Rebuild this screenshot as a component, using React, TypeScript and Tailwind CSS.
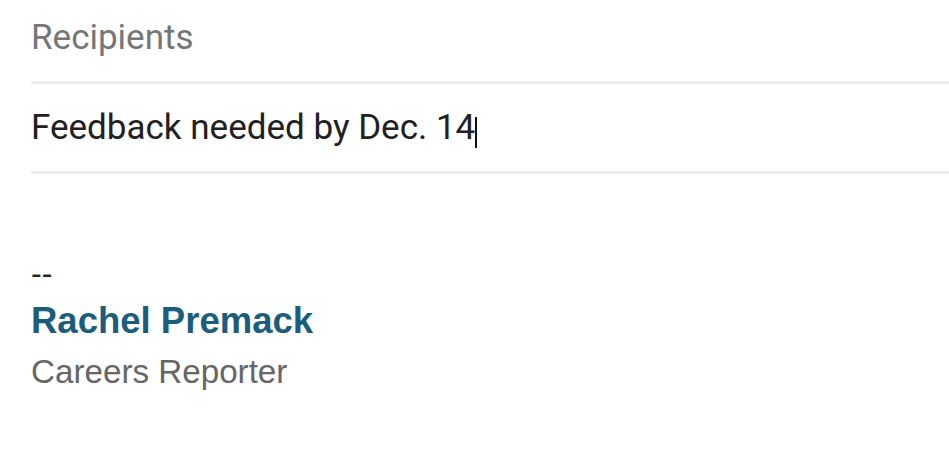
export default function App() {
  return (
    <div className="w-[949px] h-[474px] bg-white overflow-hidden">
      <div className="pl-[31px]">
        <div className="pt-[18px] pb-[23px] border-b-[3px] border-[#eceef0]">
          <div className="font-['Roboto',sans-serif] text-[35px] leading-[40px] text-[#767676]">
            Recipients
          </div>
        </div>
        <div className="pt-[24px] pb-[23px] flex items-start border-b-[3px] border-[#eceef0]">
          <span className="font-['Roboto',sans-serif] text-[35px] leading-[40px] text-[#212121]">
            Feedback needed by Dec. 14
          </span>
          <span className="w-[2px] h-[31px] mt-[9px] bg-[#111]" />
        </div>
        <div className="pt-[76px] font-['Liberation_Sans',Arial,sans-serif]">
          <div className="text-[32px] leading-[46px] text-[#222]">--</div>
          <div className="text-[36.5px] leading-[50px] font-bold text-[#1a5d7c]">Rachel Premack</div>
          <div className="text-[33.2px] leading-[51px] text-[#666]">Careers Reporter</div>
        </div>
      </div>
    </div>
  );
}
